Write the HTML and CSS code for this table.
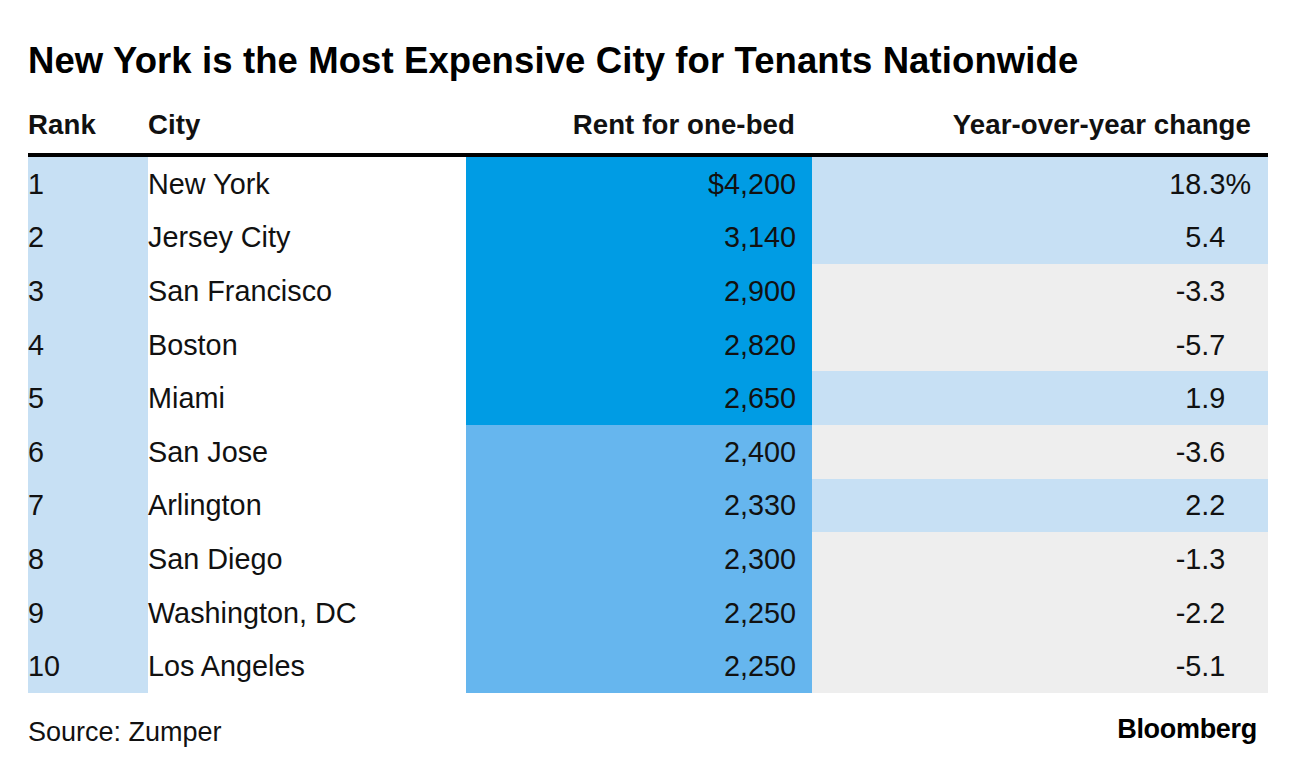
FILE: index.html
```html
<!DOCTYPE html>
<html lang="en">
<head>
<meta charset="utf-8">
<title>New York is the Most Expensive City for Tenants Nationwide</title>
<link rel="stylesheet" href="styles.css">
</head>
<body>
<div class="chart">
  <h1 class="title">New York is the Most Expensive City for Tenants Nationwide</h1>
  <div class="table">
    <div class="row head">
      <div class="cell rank">Rank</div>
      <div class="cell city">City</div>
      <div class="cell rent">Rent for one-bed</div>
      <div class="cell yoy">Year-over-year change</div>
    </div>
    <div class="row">
      <div class="cell rank">1</div>
      <div class="cell city">New York</div>
      <div class="cell rent top">$4,200</div>
      <div class="cell yoy pos">18.3%</div>
    </div>
    <div class="row">
      <div class="cell rank">2</div>
      <div class="cell city">Jersey City</div>
      <div class="cell rent top">3,140</div>
      <div class="cell yoy pos">5.4<span class="pct">%</span></div>
    </div>
    <div class="row">
      <div class="cell rank">3</div>
      <div class="cell city">San Francisco</div>
      <div class="cell rent top">2,900</div>
      <div class="cell yoy neg">-3.3<span class="pct">%</span></div>
    </div>
    <div class="row">
      <div class="cell rank">4</div>
      <div class="cell city">Boston</div>
      <div class="cell rent top">2,820</div>
      <div class="cell yoy neg">-5.7<span class="pct">%</span></div>
    </div>
    <div class="row">
      <div class="cell rank">5</div>
      <div class="cell city">Miami</div>
      <div class="cell rent top">2,650</div>
      <div class="cell yoy pos">1.9<span class="pct">%</span></div>
    </div>
    <div class="row">
      <div class="cell rank">6</div>
      <div class="cell city">San Jose</div>
      <div class="cell rent">2,400</div>
      <div class="cell yoy neg">-3.6<span class="pct">%</span></div>
    </div>
    <div class="row">
      <div class="cell rank">7</div>
      <div class="cell city">Arlington</div>
      <div class="cell rent">2,330</div>
      <div class="cell yoy pos">2.2<span class="pct">%</span></div>
    </div>
    <div class="row">
      <div class="cell rank">8</div>
      <div class="cell city">San Diego</div>
      <div class="cell rent">2,300</div>
      <div class="cell yoy neg">-1.3<span class="pct">%</span></div>
    </div>
    <div class="row">
      <div class="cell rank">9</div>
      <div class="cell city">Washington, DC</div>
      <div class="cell rent">2,250</div>
      <div class="cell yoy neg">-2.2<span class="pct">%</span></div>
    </div>
    <div class="row">
      <div class="cell rank">10</div>
      <div class="cell city">Los Angeles</div>
      <div class="cell rent">2,250</div>
      <div class="cell yoy neg">-5.1<span class="pct">%</span></div>
    </div>
  </div>
  <div class="footer">
    <div class="source">Source: Zumper</div>
    <div class="logo">Bloomberg</div>
  </div>
</div>
</body>
</html>
```

FILE: styles.css
```css
html, body {
  margin: 0;
  padding: 0;
  background: #ffffff;
}

body {
  font-family: "Liberation Sans", Arial, Helvetica, sans-serif;
  color: #111111;
}

.chart {
  width: 1240px;
  padding: 41px 28px 0 28px;
}

.title {
  margin: 0 0 28px 0;
  font-size: 36.5px;
  line-height: 40px;
  font-weight: 700;
  color: #000000;
  letter-spacing: 0.1px;
  white-space: nowrap;
}

.table {
  display: flex;
  flex-direction: column;
}

.row {
  display: grid;
  grid-template-columns: 120px 318px 346px 456px;
  height: 53.6px;
  font-size: 28.8px;
}

.row .cell {
  display: flex;
  align-items: center;
  line-height: 32px;
  white-space: nowrap;
}

.row.head {
  height: auto;
  font-size: 27.6px;
  font-weight: 700;
  padding-bottom: 12px;
  border-bottom: 4px solid #000000;
  letter-spacing: 0.1px;
}

.rank {
  background: #c7e0f4;
}

.head .rank,
.head .city,
.head .rent,
.head .yoy {
  background: transparent;
}

.rent {
  justify-content: flex-end;
  padding-right: 16px;
  background: #66b6ee;
}

.rent.top {
  background: #009ce4;
}

.head .rent {
  padding-right: 17px;
}

.yoy {
  justify-content: flex-end;
  padding-right: 17px;
}

.yoy.pos {
  background: #c7e0f4;
}

.yoy.neg {
  background: #eeeeee;
}

.pct {
  visibility: hidden;
}

.footer {
  display: flex;
  justify-content: space-between;
  align-items: baseline;
  margin-top: 24px;
  padding-right: 11px;
}

.source {
  font-size: 27px;
  line-height: 30px;
}

.logo {
  font-size: 27px;
  font-weight: 700;
  letter-spacing: -0.3px;
  color: #000000;
  position: relative;
  top: -3px;
}
```
